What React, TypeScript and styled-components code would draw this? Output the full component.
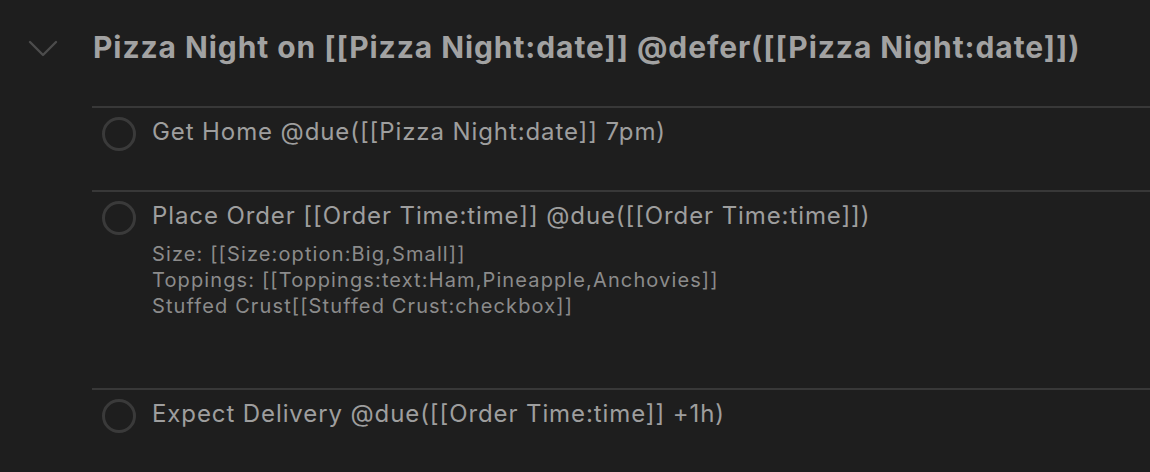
import React from "react";
import styled, { createGlobalStyle } from "styled-components";

const Global = createGlobalStyle`
  html, body { margin: 0; padding: 0; background: #1e1e1e; }
  body { font-family: Inter, "Noto Sans", sans-serif; -webkit-font-smoothing: antialiased; }
`;

const Page = styled.div`
  width: 1150px;
  height: 472px;
  background: #1e1e1e;
  overflow: hidden;
  padding-top: 23px;
  box-sizing: border-box;
`;

const Header = styled.div`
  display: flex;
  align-items: center;
  height: 48px;
`;

const ChevronBox = styled.div`
  width: 93px;
  display: flex;
  justify-content: flex-start;
  padding-left: 28px;
  padding-top: 4px;
  box-sizing: border-box;
`;

const Title = styled.h1`
  margin: 0;
  font-size: 30px;
  font-weight: 700;
  color: #a2a2a2;
  letter-spacing: 0.92px;
  white-space: nowrap;
`;

const List = styled.div`
  margin-left: 92px;
  margin-top: 35px;
`;

const Item = styled.div<{ $h: number }>`
  border-top: 2px solid #383838;
  height: ${(p) => p.$h}px;
  display: flex;
  align-items: flex-start;
  padding-left: 10px;
  padding-top: 8px;
  box-sizing: border-box;
`;

const Circle = styled.div`
  width: 34px;
  height: 34px;
  border-radius: 50%;
  border: 3px solid #3a3a3a;
  box-sizing: border-box;
  flex-shrink: 0;
  margin-top: 1px;
`;

const Body = styled.div`
  margin-left: 16px;
  display: flex;
  flex-direction: column;
`;

const TaskText = styled.div`
  font-size: 24px;
  line-height: 31px;
  letter-spacing: 0.9px;
  color: #9e9e9e;
  white-space: nowrap;
`;

const Note = styled.div`
  margin-top: 10px;
  font-size: 20px;
  line-height: 26px;
  letter-spacing: 1.12px;
  color: #8b8b8b;
  white-space: pre;
`;

const Chevron = () => (
  <svg width="30" height="18" viewBox="0 0 30 18" fill="none">
    <path d="M2 2 L15 15 L28 2" stroke="#4c4c4c" strokeWidth="2.4" strokeLinecap="round" strokeLinejoin="round" />
  </svg>
);

export default function App() {
  return (
    <>
      <Global />
      <Page>
        <Header>
          <ChevronBox>
            <Chevron />
          </ChevronBox>
          <Title>Pizza Night on [[Pizza Night:date]] @defer([[Pizza Night:date]])</Title>
        </Header>
        <List>
          <Item $h={84}>
            <Circle />
            <Body>
              <TaskText>Get Home @due([[Pizza Night:date]] 7pm)</TaskText>
            </Body>
          </Item>
          <Item $h={198}>
            <Circle />
            <Body>
              <TaskText>Place Order [[Order Time:time]] @due([[Order Time:time]])</TaskText>
              <Note>{"Size: [[Size:option:Big,Small]]\nToppings: [[Toppings:text:Ham,Pineapple,Anchovies]]\nStuffed Crust[[Stuffed Crust:checkbox]]"}</Note>
            </Body>
          </Item>
          <Item $h={90}>
            <Circle />
            <Body>
              <TaskText>Expect Delivery @due([[Order Time:time]] +1h)</TaskText>
            </Body>
          </Item>
        </List>
      </Page>
    </>
  );
}
